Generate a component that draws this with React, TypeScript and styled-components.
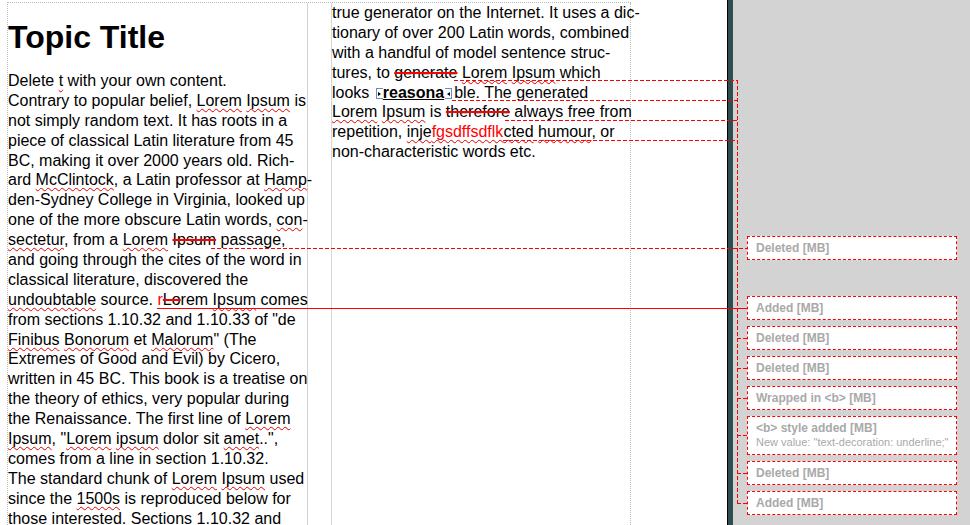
import React from "react"
import styled, { createGlobalStyle } from "styled-components"

const Global = createGlobalStyle`
  html, body { margin: 0; padding: 0; overflow: hidden; background: #fff; }
  body { font-family: "Liberation Sans", Arial, sans-serif; }
`

const Sp = styled.span`
  text-decoration: underline wavy #e00000;
  text-decoration-thickness: 1px;
  text-underline-offset: 2px;
  text-decoration-skip-ink: none;
`

const Del = styled.span`
  text-decoration: line-through 2px #ff0000;
`

const Ins = styled.span`
  color: #ff0000;
`

const Strong = styled.b`
  text-decoration: underline #000;
`

const WrapMark = styled.span<{ $side: "open" | "close" }>`
  position: relative;
  display: inline-block;
  box-sizing: border-box;
  width: 7px;
  height: 11px;
  vertical-align: -1px;
  border: 1px solid #6c8cc6;
  ${(p) => (p.$side === "open" ? "border-right: none; margin: 0 0 0 2px;" : "border-left: none; margin: 0 2px 0 1px;")}

  &::after {
    content: "";
    position: absolute;
    top: 3px;
    ${(p) =>
      p.$side === "open"
        ? "left: 1px; border-left: 3px solid #000;"
        : "right: 1px; border-right: 3px solid #000;"}
    border-top: 2px solid transparent;
    border-bottom: 2px solid transparent;
  }
`

const Screen = styled.div`
  position: relative;
  display: flex;
  width: 970px;
  height: 525px;
  overflow: hidden;
`

const Page = styled.div`
  flex: none;
  width: 727px;
  height: 525px;
  background: #fff;
`

const TextFrame = styled.div`
  display: flex;
  align-items: stretch;
  width: fit-content;
  height: 523px;
  margin: 2px 0 0 7px;
  border-top: 1px dotted #bdbdbd;
  border-left: 1px dotted #bdbdbd;
  box-sizing: border-box;
`

const Column = styled.div<{ $second?: boolean }>`
  width: ${(p) => (p.$second ? 298 : 299)}px;
  color: #000;
  font: 16px/19.9px "Liberation Sans", Arial, sans-serif;
  ${(p) =>
    p.$second
      ? "margin-left: 23px; border-left: 1px solid #d6d6d6; border-right: 1px dotted #bdbdbd;"
      : "border-right: 1px solid #d2d2d2;"}
`

const Title = styled.h1`
  margin: 16px 0 16px;
  font: bold 32px/36px "Liberation Sans", Arial, sans-serif;
  color: #000;
`

const Lines = styled.div``

const Line = styled.div`
  height: 19.9px;
  white-space: pre;
`

const Divider = styled.div`
  flex: none;
  width: 5px;
  border-left: 1px solid #000;
  background: #2f4f4f;
`

const Sidebar = styled.div`
  flex: 1;
  display: flex;
  flex-direction: column;
  gap: 6px;
  padding: 236px 0 0 14px;
  background: #d3d3d3;
`

const Balloon = styled.div<{ $spaced?: boolean }>`
  width: 210px;
  box-sizing: border-box;
  padding: 4px 8px;
  margin-top: ${(p) => (p.$spaced ? 30 : 0)}px;
  background: #fff;
  border: 1px dashed #ff0000;
  color: #a9a9a9;
`

const BalloonTitle = styled.div`
  font: bold 12px/14px "Liberation Sans", Arial, sans-serif;
  white-space: nowrap;
`

const BalloonDetail = styled.div`
  font: 11px/14px "Liberation Sans", Arial, sans-serif;
  white-space: nowrap;
  padding-bottom: 1px;
`

const Connectors = styled.svg`
  position: absolute;
  left: 0;
  top: 0;
  pointer-events: none;
`

const firstColumn: React.ReactNode[] = [
  <>Delete <Sp>t</Sp> with your own content.</>,
  <>Contrary to popular belief, <Sp>Lorem</Sp> <Sp>Ipsum</Sp> is</>,
  <>not simply random text. It has roots in a</>,
  <>piece of classical Latin literature from 45</>,
  <>BC, making it over 2000 years old. Rich-</>,
  <>ard <Sp>McClintock</Sp>, a Latin professor at <Sp>Hamp</Sp>-</>,
  <>den-Sydney College in Virginia, looked up</>,
  <>one of the more obscure Latin words, <Sp>con</Sp>-</>,
  <><Sp>sectetur</Sp>, from a <Sp>Lorem</Sp> <Del>Ipsum</Del> passage,</>,
  <>and going through the cites of the word in</>,
  <>classical literature, discovered the</>,
  <><Sp>undoubtable</Sp> source. <Ins>r</Ins><Del>Lo</Del>rem <Sp>Ipsum</Sp> comes</>,
  <>from sections 1.10.32 and 1.10.33 of "de</>,
  <><Sp>Finibus</Sp> <Sp>Bonorum</Sp> et <Sp>Malorum</Sp>" (The</>,
  <>Extremes of Good and Evil) by Cicero,</>,
  <>written in 45 BC. This book is a treatise on</>,
  <>the theory of ethics, very popular during</>,
  <>the Renaissance. The first line of <Sp>Lorem</Sp></>,
  <><Sp>Ipsum</Sp>, "<Sp>Lorem</Sp> <Sp>ipsum</Sp> dolor sit <Sp>amet</Sp>..",</>,
  <>comes from a line in section 1.10.32.</>,
  <>The standard chunk of <Sp>Lorem</Sp> <Sp>Ipsum</Sp> used</>,
  <>since the <Sp>1500s</Sp> is reproduced below for</>,
  <>those interested. Sections 1.10.32 and</>,
]

const secondColumn: React.ReactNode[] = [
  <>true generator on the Internet. It uses a dic-</>,
  <>tionary of over 200 Latin words, combined</>,
  <>with a handful of model sentence struc-</>,
  <>tures, to <Del>generate</Del> <Sp>Lorem</Sp> <Sp>Ipsum</Sp> which</>,
  <>looks <WrapMark $side="open" /><Strong>reasona</Strong><WrapMark $side="close" />ble. The generated</>,
  <><Sp>Lorem</Sp> <Sp>Ipsum</Sp> is <Del>therefore</Del> always free from</>,
  <>repetition, <Sp>inje<Ins>fgsdffsdflk</Ins>cted</Sp> <Sp>humour</Sp>, or</>,
  <>non-characteristic words etc.</>,
]

const changes = [
  { title: "Deleted [MB]" },
  { title: "Added [MB]", spaced: true },
  { title: "Deleted [MB]" },
  { title: "Deleted [MB]" },
  { title: "Wrapped in <b> [MB]" },
  { title: "<b> style added [MB]", detail: 'New value: "text-decoration: underline;"' },
  { title: "Deleted [MB]" },
  { title: "Added [MB]" },
]

const dash = { stroke: "#ff0000", strokeWidth: 1, strokeDasharray: "4 2", fill: "none" }

const ConnectorLines: React.FC = () => (
  <Connectors width={970} height={525}>
    <path d="M211 248.5H747" {...dash} />
    <path d="M157 308.5H747" stroke="#ff0000" strokeWidth={1} />
    <path d="M454 80.5H737M452 100.5H737M505 120.5H737M503 140.5H737" {...dash} />
    <path d="M737.5 80V504" {...dash} />
    <path d="M737 338.5H747M737 368.5H747M737 398.5H747M737 435.5H747M737 473.5H747M737 503.5H747" {...dash} />
  </Connectors>
)

export default function App() {
  return (
    <Screen>
      <Global />
      <Page>
        <TextFrame>
          <Column>
            <Title>Topic Title</Title>
            <Lines>
              {firstColumn.map((line, i) => (
                <Line key={i}>{line}</Line>
              ))}
            </Lines>
          </Column>
          <Column $second>
            <Lines>
              {secondColumn.map((line, i) => (
                <Line key={i}>{line}</Line>
              ))}
            </Lines>
          </Column>
        </TextFrame>
      </Page>
      <Divider />
      <Sidebar>
        {changes.map((c, i) => (
          <Balloon key={i} $spaced={c.spaced}>
            <BalloonTitle>{c.title}</BalloonTitle>
            {c.detail && <BalloonDetail>{c.detail}</BalloonDetail>}
          </Balloon>
        ))}
      </Sidebar>
      <ConnectorLines />
    </Screen>
  )
}
